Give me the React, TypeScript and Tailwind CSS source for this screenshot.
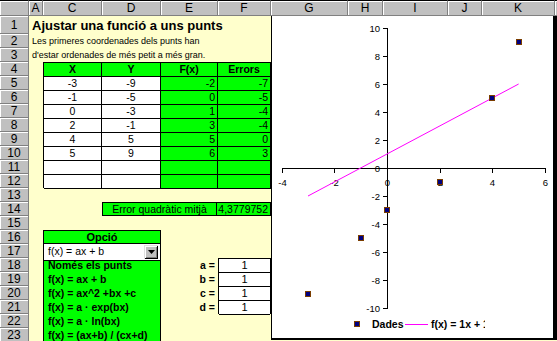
const columns = ["A", "C", "D", "E", "F", "G", "H", "I", "J", "K", ""];

const tableRows = [
  ["-3", "-9", "-2", "-7"],
  ["-1", "-5", "0", "-5"],
  ["0", "-3", "1", "-4"],
  ["2", "-1", "3", "-4"],
  ["4", "5", "5", "0"],
  ["5", "9", "6", "3"],
  ["", "", "", ""],
  ["", "", "", ""],
];

const options = [
  "Només els punts",
  "f(x) = ax + b",
  "f(x) = ax^2 +bx +c",
  "f(x) = a · exp(bx)",
  "f(x) = a · ln(bx)",
  "f(x) = (ax+b) / (cx+d)",
];

const params = ["a", "b", "c", "d"];

const points = [
  [-3, -9],
  [-1, -5],
  [0, -3],
  [2, -1],
  [4, 5],
  [5, 9],
];

const px = (x: number) => 387 + x * 26.33;
const py = (y: number) => 168 - y * 14;

function Marker({ x, y }: { x: number; y: number }) {
  return <rect x={Math.round(x) - 2.5} y={Math.round(y) - 2.5} width={5} height={5} fill="#000080" stroke="#7a3d00" strokeWidth={1} />;
}

function Chart() {
  const yTicks = [10, 8, 6, 4, 2, 0, -2, -4, -6, -8, -10];
  const xTicks = [-4, -2, 0, 2, 4, 6];
  return (
    <div className="absolute left-[271px] top-[16px] h-[324px] w-[286px] border-b-2 border-l border-r-4 border-black bg-white">
      <svg className="absolute inset-0" width={281} height={322} viewBox="272 16 281 322">
        <g stroke="#000" strokeWidth={1} shapeRendering="crispEdges">
          <line x1={387.5} y1={28} x2={387.5} y2={309} />
          {yTicks.map((v) => (
            <line key={v} x1={383} y1={py(v) + 0.5} x2={387} y2={py(v) + 0.5} />
          ))}
          <line x1={282} y1={168.5} x2={546} y2={168.5} />
          {xTicks.map((v) => (
            <line key={v} x1={Math.round(px(v)) + 0.5} y1={168} x2={Math.round(px(v)) + 0.5} y2={173} />
          ))}
        </g>
        <g fontSize={9.5} fill="#000">
          {yTicks.map((v) => (
            <text key={v} x={380} y={py(v) + 3.5} textAnchor="end">
              {v}
            </text>
          ))}
          {xTicks.map((v) => (
            <text key={v} x={Math.round(px(v)) + 0.5} y={186} textAnchor="middle">
              {v}
            </text>
          ))}
        </g>
        <line x1={px(-3)} y1={py(-2)} x2={px(5)} y2={py(6)} stroke="#ff00ff" strokeWidth={1} />
        {points.map(([x, y]) => (
          <Marker key={x} x={px(x)} y={py(y)} />
        ))}
        {/* legend */}
        <Marker x={357} y={324} />
        <text x={372} y={328} fontSize={10.5} fontWeight="bold">
          Dades
        </text>
        <line x1={405} y1={324.5} x2={428} y2={324.5} stroke="#ff00ff" strokeWidth={1} />
        <clipPath id="legendClip">
          <rect x={428} y={310} width={57} height={25} />
        </clipPath>
        <text x={431} y={328} fontSize={10.5} fontWeight="bold" clipPath="url(#legendClip)">
          f(x) = 1x + 1
        </text>
      </svg>
    </div>
  );
}

export default function App() {
  return (
    <div className="relative h-[341px] w-[557px] overflow-hidden bg-[#ffffcc] text-black [font-family:'Liberation_Sans',Arial,sans-serif]">
      <div className="grid grid-cols-[29px_14px_59px_59px_57px_53px_77px_35px_65px_34px_73px_20px] grid-rows-[16px_18px_repeat(22,14px)]">
        {/* column headers */}
        <div className="border-b border-r border-t border-[#808080] border-t-black bg-[#c0c0c0] shadow-[inset_1px_1px_0_#ffffff]" />
        {columns.map((c, i) => (
          <div
            key={i}
            className="flex items-center justify-center border-b border-r border-t border-[#808080] border-t-black bg-[#c0c0c0] text-[12px] leading-none shadow-[inset_1px_1px_0_#ffffff]"
          >
            {c}
          </div>
        ))}

        {/* row headers */}
        <div className="col-start-1 row-span-23 row-start-2 flex flex-col">
          {Array.from({ length: 23 }, (_, i) => (
            <div
              key={i}
              className={`flex shrink-0 items-center justify-center border-b border-r border-[#808080] bg-[#c0c0c0] text-[12px] leading-none shadow-[inset_1px_1px_0_#ffffff] ${i === 0 ? "h-[18px]" : "h-[14px]"}`}
            >
              {i + 1}
            </div>
          ))}
        </div>

        {/* title */}
        <div className="col-span-10 col-start-2 row-start-2 whitespace-nowrap pl-[3px] text-[13px] font-bold leading-[19px]">
          Ajustar una funció a uns punts
        </div>
        <div className="col-span-10 col-start-2 row-start-3 whitespace-nowrap pl-[3px] text-[9px] leading-[15px]">
          Les primeres coordenades dels punts han
        </div>
        <div className="col-span-10 col-start-2 row-start-4 whitespace-nowrap pl-[3px] text-[9px] leading-[15px]">
          d'estar ordenades de més petit a més gran.
        </div>

        {/* data table */}
        <div className="col-span-4 col-start-3 row-span-9 row-start-5 grid grid-cols-[1fr_59px_57px_53px] grid-rows-[1fr_repeat(8,14px)] border-l border-t border-black text-[10.5px] leading-[13px]">
          {["X", "Y", "F(x)", "Errors"].map((h) => (
            <div key={h} className="border-b border-r border-black bg-[#00ff00] text-center font-bold">
              {h}
            </div>
          ))}
          {tableRows.map((r, i) =>
            r.map((v, j) => (
              <div
                key={`${i}-${j}`}
                className={j < 2 ? "border-b border-r border-black bg-white text-center" : "border-b border-r border-black bg-[#00ff00] pr-[2px] text-right"}
              >
                {v}
              </div>
            ))
          )}
        </div>

        {/* error */}
        <div className="col-span-3 col-start-4 row-start-15 grid grid-cols-[1fr_53px] border border-black bg-[#00ff00] text-[10.5px] leading-[12px]">
          <div className="border-r border-black text-center">Error quadràtic mitjà</div>
          <div className="pr-[2px] text-right">4,3779752</div>
        </div>

        {/* option list */}
        <div className="col-span-2 col-start-3 row-span-8 row-start-17 flex flex-col border-x border-black bg-[#00ff00]">
          <div className="h-[14px] shrink-0 border-b border-t border-black text-center text-[11px] font-bold leading-[12px]">Opció</div>
          <div className="relative z-10 -mb-[3px] flex h-[17px] shrink-0 items-center border-b border-black bg-white pl-[4px] text-[10.5px]">
            f(x) = ax + b
            <div className="absolute right-[2px] top-[1px] flex h-[14px] w-[14px] items-center justify-center bg-[#c0c0c0] shadow-[inset_1px_1px_0_#dfdfdf,inset_-1px_-1px_0_#000000,inset_2px_2px_0_#ffffff,inset_-2px_-2px_0_#808080]">
              <svg width="7" height="4" viewBox="0 0 7 4">
                <path d="M0 0h7L3.5 4z" fill="#000" />
              </svg>
            </div>
          </div>
          {options.map((o) => (
            <div key={o} className="h-[14px] shrink-0 whitespace-nowrap pl-[4px] text-[10.5px] font-bold leading-[14px]">
              {o}
            </div>
          ))}
        </div>

        {/* parameters */}
        <div className="col-start-5 row-span-4 row-start-19 flex flex-col">
          {params.map((p) => (
            <div key={p} className="h-[14px] pr-[3px] text-right text-[10.5px] font-bold leading-[14px]">
              {p} =
            </div>
          ))}
        </div>
        <div className="col-start-6 row-span-4 row-start-19 flex flex-col border-x border-t border-black bg-white">
          {params.map((p) => (
            <div key={p} className="h-[14px] border-b border-black text-center text-[11px] leading-[13px]">
              1
            </div>
          ))}
        </div>
      </div>
      <Chart />
    </div>
  );
}
